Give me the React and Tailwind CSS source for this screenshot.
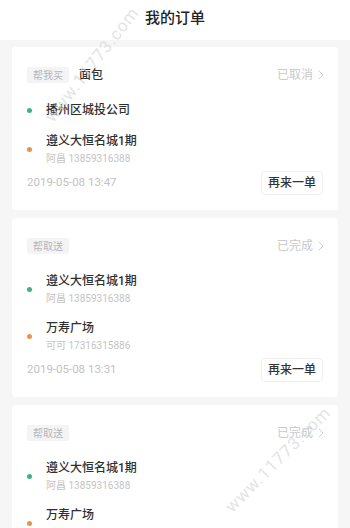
const orders = [
  {
    tag: "帮我买",
    title: "面包",
    status: "已取消",
    stops: [
      { color: "green", name: "播州区城投公司" },
      { color: "orange", name: "遵义大恒名城1期", contact: "阿昌 13859316388" },
    ],
    time: "2019-05-08 13:47",
  },
  {
    tag: "帮取送",
    status: "已完成",
    stops: [
      { color: "green", name: "遵义大恒名城1期", contact: "阿昌 13859316388" },
      { color: "orange", name: "万寿广场", contact: "可可 17316315886" },
    ],
    time: "2019-05-08 13:31",
  },
  {
    tag: "帮取送",
    status: "已完成",
    stops: [
      { color: "green", name: "遵义大恒名城1期", contact: "阿昌 13859316388" },
      { color: "orange", name: "万寿广场", contact: "可可 17316315886" },
    ],
    time: "2019-05-08 13:20",
  },
];

const Chevron = () => (
  <svg width="6" height="10" viewBox="0 0 6 10" fill="none">
    <path d="M1 1l4 4-4 4" stroke="#cfcfcf" strokeWidth="1" />
  </svg>
);

const OrderCard = ({ order }) => (
  <div className="bg-white rounded-[4px] pt-5 pb-[15px] pl-[15px] pr-[14px]">
    <div className="flex items-center h-4">
      <span className="h-4 px-[6px] flex items-center rounded-[2px] bg-[#f4f4f6] text-[10px] text-[#b4b4b8]">
        {order.tag}
      </span>
      {order.title && (
        <span className="ml-[10px] text-[12px] font-medium text-[#333]">{order.title}</span>
      )}
      <span className="ml-auto flex items-center gap-[5px] text-[12px] text-[#cacaca]">
        {order.status}
        <Chevron />
      </span>
    </div>

    <div className="mt-[19px] flex flex-col gap-[14px]">
      {order.stops.map((s, i) => (
        <div key={i} className="flex items-center">
          <span
            className={
              "w-[5px] h-[5px] rounded-full ml-[0px] " +
              (s.color === "green" ? "bg-[#3fb37f]" : "bg-[#e9944c]")
            }
          />
          <div className="ml-[14px]">
            <div className="text-[12px] leading-[17px] font-medium text-[#2f2f2f]">{s.name}</div>
            {s.contact && (
              <div className="mt-[2px] text-[10px] leading-[14px] text-[#c4c4c4]">{s.contact}</div>
            )}
          </div>
        </div>
      ))}
    </div>

    <div className="mt-[5px] flex items-center justify-between">
      <span className="text-[11.5px] text-[#c2c2c2]">{order.time}</span>
      <button className="h-6 w-[62px] mr-[1px] rounded-[4px] border border-[#f0f0f0] bg-white text-[12px] font-medium text-[#333]">
        再来一单
      </button>
    </div>
  </div>
);

export default function App() {
  return (
    <div
      className="relative w-[350px] h-[528px] overflow-hidden bg-[#f6f6f6]"
      style={{ fontFamily: 'Roboto, "Noto Sans CJK SC", sans-serif' }}
    >
      <div className="h-10 bg-white flex items-center justify-center">
        <h1 className="text-[15px] font-medium text-[#222] -mt-[4px]">我的订单</h1>
      </div>
      <div className="px-3 pt-[7px] flex flex-col gap-2">
        {orders.map((o, i) => (
          <OrderCard key={i} order={o} />
        ))}
      </div>

      {/* watermark */}
      <span className="absolute left-[22px] top-[52px] -rotate-[52deg] text-[17px] tracking-[1px] text-[#d9d9d9] opacity-70 pointer-events-none">
        www.11773.com
      </span>
      <span className="absolute left-[208px] top-[447px] -rotate-[45deg] text-[17px] tracking-[1px] text-[#d9d9d9] opacity-70 pointer-events-none">
        www.11773.com
      </span>
    </div>
  );
}
